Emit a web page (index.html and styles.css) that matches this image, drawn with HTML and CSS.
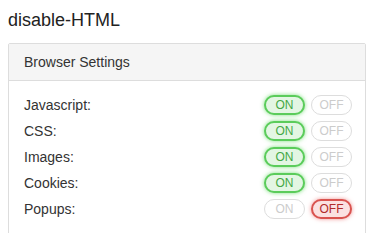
FILE: index.html
```html
<!DOCTYPE html>
<html>
<head>
<meta charset="utf-8">
<link rel="stylesheet" href="styles.css">
</head>
<body>
<h1 class="title">disable-HTML</h1>
<div class="panel">
  <div class="panel-heading">Browser Settings</div>
  <div class="panel-body">
    <div class="row"><span class="label">Javascript:</span><div class="toggles"><span class="btn on-active">ON</span><span class="btn idle">OFF</span></div></div>
    <div class="row"><span class="label">CSS:</span><div class="toggles"><span class="btn on-active">ON</span><span class="btn idle">OFF</span></div></div>
    <div class="row"><span class="label">Images:</span><div class="toggles"><span class="btn on-active">ON</span><span class="btn idle">OFF</span></div></div>
    <div class="row"><span class="label">Cookies:</span><div class="toggles"><span class="btn on-active">ON</span><span class="btn idle">OFF</span></div></div>
    <div class="row"><span class="label">Popups:</span><div class="toggles"><span class="btn idle">ON</span><span class="btn off-active">OFF</span></div></div>
  </div>
</div>
</body>
</html>
```
FILE: styles.css
```css
html, body {
  background: #fff;
}
body {
  margin: 8px;
  font-family: "Liberation Sans", Arial, sans-serif;
  color: #333;
}
.title {
  margin: 2px 0 13px;
  font-size: 18px;
  line-height: 20px;
  font-weight: normal;
  color: #222;
}
.panel {
  border: 1px solid #ddd;
  border-radius: 2px;
}
.panel-heading {
  background: #f5f5f5;
  border-bottom: 1px solid #ddd;
  padding: 8px 15px;
  font-size: 14px;
  line-height: 20px;
  color: #333;
}
.panel-body {
  padding: 11px 13px 20px 15px;
}
.row {
  display: flex;
  align-items: center;
  justify-content: space-between;
  height: 26px;
  font-size: 14px;
  line-height: 26px;
  color: #333;
}
.toggles {
  display: flex;
  gap: 6px;
}
.btn {
  box-sizing: border-box;
  width: 41px;
  height: 20px;
  border-radius: 10px;
  border: 1px solid #ddd;
  font-size: 12px;
  line-height: 18px;
  text-align: center;
  background: #fff;
}
.idle {
  color: #ccc;
  border-color: #ddd;
}
.on-active {
  color: #45a845;
  background: #e3f6e3;
  border: 2px solid #5bcc5b;
  line-height: 16px;
  box-shadow: 0 0 4px rgba(70, 210, 70, 0.7);
}
.off-active {
  color: #b22b2b;
  background: #fbe1e1;
  border: 2px solid #d9534f;
  line-height: 16px;
  box-shadow: 0 0 4px rgba(230, 80, 80, 0.6);
}
```
